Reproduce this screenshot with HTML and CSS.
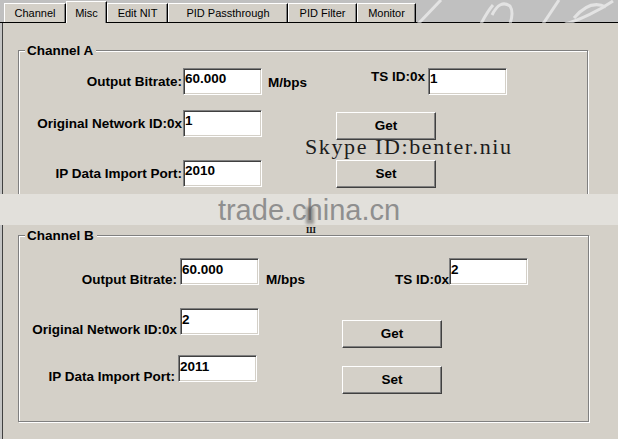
FILE: index.html
```html
<!DOCTYPE html>
<html>
<head>
<meta charset="utf-8">
<title>Misc</title>
<link rel="stylesheet" href="styles.css">
</head>
<body>
<div class="window">
  <div class="tabbar">
    <svg class="scribble" viewBox="0 0 618 23" width="618" height="23">
      <path d="M418 24 L441 0"/>
      <path d="M481 24 Q487 12 493 5 M492 15 Q500 -1 510 6 Q514 12 510 24"/>
      <path d="M543 24 Q551 12 559 0"/>
      <path d="M565 24 C580 20 600 10 613 1 M574 18 Q590 -1 606 7"/>
    </svg>
    <div class="tab tab-channel">Channel</div>
    <div class="tab tab-misc active">Misc</div>
    <div class="tab tab-nit">Edit NIT</div>
    <div class="tab tab-pass">PID Passthrough</div>
    <div class="tab tab-filter">PID Filter</div>
    <div class="tab tab-monitor">Monitor</div>
  </div>
  <div class="panel">
    <section class="group group-a">
      <div class="legend">Channel A</div>
      <div class="grid">
        <div class="lbl r1">Output Bitrate:</div>
        <div class="input field r1">60.000</div>
        <div class="unit r1">M/bps</div>
        <div class="ts r1"><span class="ts-lbl">TS ID:0x</span><div class="input">1</div></div>
        <div class="lbl r2">Original Network ID:0x</div>
        <div class="input field r2">1</div>
        <div class="lbl r3">IP Data Import Port:</div>
        <div class="input field r3">2010</div>
        <div class="btns"><div class="btn">Get</div><div class="btn">Set</div></div>
      </div>
    </section>
    <section class="group group-b">
      <div class="legend">Channel B</div>
      <div class="grid">
        <div class="lbl r1">Output Bitrate:</div>
        <div class="input field r1">60.000</div>
        <div class="unit r1">M/bps</div>
        <div class="ts r1"><span class="ts-lbl">TS ID:0x</span><div class="input">2</div></div>
        <div class="lbl r2">Original Network ID:0x</div>
        <div class="input field r2">2</div>
        <div class="lbl r3 nudge">IP Data Import Port:</div>
        <div class="input field r3 nudge">2011</div>
        <div class="btns"><div class="btn">Get</div><div class="btn">Set</div></div>
      </div>
    </section>
  </div>
</div>
<div class="band">trade.china.cn</div>
<div class="smudge"></div>
<div class="grip">Ш</div>
<div class="skype">Skype ID:benter.niu</div>
</body>
</html>
```

FILE: styles.css
```css
* { box-sizing: border-box; }
html, body { margin: 0; padding: 0; }
body {
  position: relative;
  width: 618px;
  height: 439px;
  overflow: hidden;
  background: #c4c4c4;
  font-family: "Liberation Sans", Arial, sans-serif;
  color: #000;
}
.window {
  height: 439px;
  display: flex;
  flex-direction: column;
}

/* tabs */
.tabbar {
  position: relative;
  flex: none;
  height: 23px;
  display: flex;
  align-items: flex-end;
  padding-left: 4px;
  background: #c0c0c0;
  border-bottom: 1px solid #000;
}
.scribble {
  position: absolute;
  left: 0;
  top: 0;
  fill: none;
  stroke: rgba(255, 255, 255, 0.55);
  stroke-width: 3;
}
.tab {
  position: relative;
  height: 19px;
  border-top: 1px solid #fff;
  border-left: 1px solid #fff;
  border-right: 1px solid #000;
  box-shadow: inset -1px 0 0 #808080;
  background: #d4d0c8;
  font-size: 11px;
  line-height: 18px;
  text-align: center;
  white-space: nowrap;
}
.tab.active {
  height: 22px;
  margin-bottom: -1px;
  padding-top: 2px;
}
.tab-channel { width: 62px; }
.tab-misc { width: 41px; }
.tab-nit { width: 61px; }
.tab-pass { width: 120px; }
.tab-filter { width: 69px; }
.tab-monitor { width: 59px; }

/* panel */
.panel {
  flex: 1;
  margin-left: 2px;
  border-left: 1px solid #404040;
  background: #d4d0c8;
  padding: 27px 0 0 15px;
}
.group {
  width: 570px;
  border: 1px solid #808080;
  box-shadow: 1px 1px 0 #fff, inset 1px 1px 0 #fff;
}
.group-a { height: 161px; }
.group-b { height: 187px; width: 571px; margin-top: 24px; }
.legend {
  width: fit-content;
  margin: -8px 0 0 6px;
  padding: 0 3px 0 2px;
  background: #d4d0c8;
  font-weight: bold;
  font-size: 13.5px;
  line-height: 15px;
}

.grid { display: grid; }
.group-a .grid {
  margin-top: 10px;
  grid-template-columns: 164px 79px 74px auto;
  grid-template-rows: 27px 15px 27px 23px 27px;
}
.group-b .grid {
  margin-top: 15px;
  grid-template-columns: 161px 79px 83px auto;
  grid-template-rows: 27px 23px 27px 20px 27px;
}
.r1 { grid-row: 1; }
.r2 { grid-row: 3; }
.r3 { grid-row: 5; }

.lbl, .unit, .ts-lbl {
  font-weight: bold;
  font-size: 13.5px;
  line-height: 15px;
  white-space: nowrap;
}
.lbl {
  grid-column: 1;
  text-align: right;
  align-self: center;
  padding-right: 1px;
}
.unit {
  grid-column: 3;
  align-self: center;
  padding-left: 6px;
  margin-top: 2px;
}
.group-b .lbl {
  align-self: end;
  margin-bottom: -2px;
  padding-right: 3px;
}
.group-b .lbl.nudge { padding-right: 5px; }
.group-b .unit {
  align-self: end;
  margin: 0 0 -2px;
  padding-left: 7px;
}

.input {
  width: 79px;
  height: 27px;
  background: #fff;
  border-top: 1px solid #808080;
  border-left: 1px solid #808080;
  border-right: 1px solid #fff;
  border-bottom: 1px solid #fff;
  box-shadow: inset 1px 1px 0 #404040, inset -1px -1px 0 #d4d0c8;
  padding: 2px 0 0 1px;
  font-weight: bold;
  font-size: 13.5px;
  line-height: 15px;
  white-space: nowrap;
}
.group-b .input { padding-top: 3px; }
.field { grid-column: 2; }
.field.nudge { margin-left: -2px; }

.ts {
  grid-column: 4;
  display: flex;
  align-items: flex-start;
}
.ts-lbl { text-align: right; }
.group-a .ts-lbl { width: 89px; margin: 1px 3px 0 0; }
.group-b .ts { align-items: flex-end; }
.group-b .ts-lbl { width: 107px; margin-bottom: -2px; }

.btns {
  grid-column: 4;
  grid-row: 3 / 6;
  display: flex;
  flex-direction: column;
}
.group-a .btns { padding-top: 2px; gap: 20px; }
.group-b .btns { padding-top: 12px; gap: 18px; }
.btn {
  width: 100px;
  height: 28px;
  background: #d4d0c8;
  border-top: 1px solid #fff;
  border-left: 1px solid #fff;
  border-right: 1px solid #404040;
  border-bottom: 1px solid #404040;
  box-shadow: inset -1px -1px 0 #808080;
  text-align: center;
  font-weight: bold;
  font-size: 13.5px;
  line-height: 26px;
}

/* watermark overlays */
.band {
  position: absolute;
  left: 0;
  top: 194px;
  width: 618px;
  height: 31px;
  padding-top: 1px;
  background: #e2e0db;
  color: #8f8f8f;
  font-size: 29px;
  line-height: 30px;
  text-align: center;
  white-space: nowrap;
}
.smudge {
  position: absolute;
  left: 306px;
  top: 207px;
  width: 8px;
  height: 17px;
  background: rgba(60, 60, 60, 0.45);
  filter: blur(1.5px);
}
.grip {
  position: absolute;
  left: 306px;
  top: 226px;
  font-family: "Liberation Serif", serif;
  font-weight: bold;
  font-size: 9px;
  line-height: 8px;
  color: #111;
}
.skype {
  position: absolute;
  left: 305px;
  top: 136px;
  font-family: "Liberation Serif", "DejaVu Serif", serif;
  font-size: 22px;
  line-height: 22px;
  letter-spacing: 1.6px;
  color: #1c1c1c;
  white-space: nowrap;
}
```
